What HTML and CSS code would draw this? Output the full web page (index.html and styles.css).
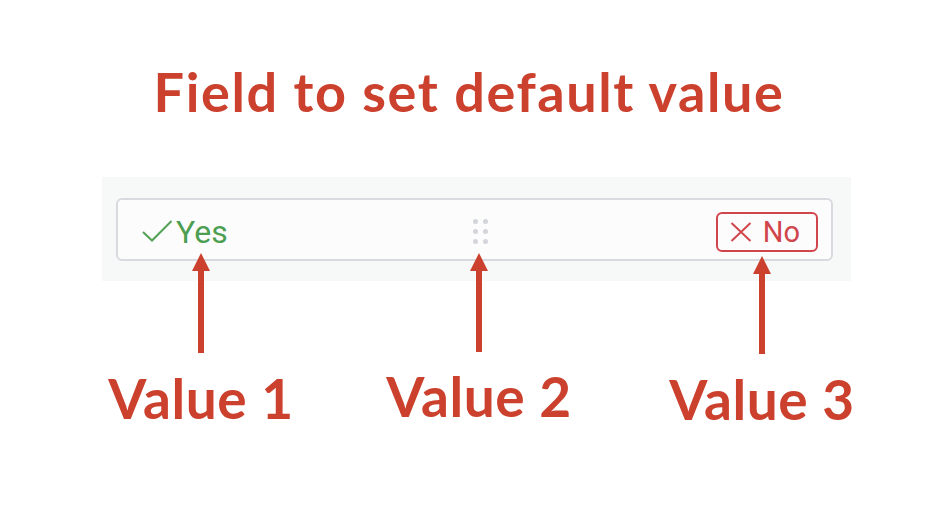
FILE: index.html
```html
<!DOCTYPE html>
<html>
  <head>
    <link rel="stylesheet" href="styles.css">
  </head>
  <body>
    <h1 class="title">Field to set default value</h1>

    <div class="panel">
      <div class="field">
        <span class="opt opt-yes">
          <svg class="icon-check" width="31" height="22" viewBox="0 0 31 22">
            <polyline points="1,12 10,20.5 29.5,1" fill="none" stroke="#52a155" stroke-width="2" />
          </svg>
          Yes
        </span>
        <span class="handle">
          <i></i><i></i><i></i><i></i><i></i><i></i>
        </span>
        <span class="opt opt-no">
          <svg class="icon-x" width="22" height="20" viewBox="0 0 22 20">
            <path d="M1.5 1 L20.5 19 M20.5 1 L1.5 19" fill="none" stroke="#d1474c" stroke-width="2" />
          </svg>
          No
        </span>
      </div>
    </div>

    <div class="notes">
      <div class="note note-1">
        <svg class="arrow" width="18" height="100" viewBox="0 0 18 100">
          <polygon points="9,0 18,18 0,18" fill="#cc412e" />
          <rect x="6" y="16" width="6" height="84" fill="#cc412e" />
        </svg>
        <div class="note-label">Value 1</div>
      </div>
      <div class="note note-2">
        <svg class="arrow" width="18" height="99" viewBox="0 0 18 99">
          <polygon points="9,0 18,18 0,18" fill="#cc412e" />
          <rect x="6" y="16" width="6" height="83" fill="#cc412e" />
        </svg>
        <div class="note-label">Value 2</div>
      </div>
      <div class="note note-3">
        <svg class="arrow" width="18" height="98" viewBox="0 0 18 98">
          <polygon points="9,0 18,18 0,18" fill="#cc412e" />
          <rect x="6" y="16" width="6" height="82" fill="#cc412e" />
        </svg>
        <div class="note-label">Value 3</div>
      </div>
    </div>
  </body>
</html>
```

FILE: styles.css
```css
* {
  box-sizing: border-box;
}
body {
  margin: 0;
  background-color: #ffffff;
  font-family: "Lato", "Liberation Sans", sans-serif;
}

.title {
  margin: 65px 0 0 0;
  font-size: 54px;
  line-height: 54px;
  font-weight: 700;
  letter-spacing: 1.6px;
  color: #cc412e;
  text-align: center;
}

.panel {
  width: 749px;
  height: 104px;
  margin: 58px 0 0 102px;
  padding: 21px 18px 20px 14px;
  background-color: #f7f8f8;
}

.field {
  display: flex;
  align-items: center;
  justify-content: space-between;
  height: 63px;
  padding: 4px 13px 0 24px;
  background-color: #fcfcfd;
  border: 2px solid #d8dadf;
  border-radius: 6px;
  font-family: "Roboto", "Liberation Sans", sans-serif;
}

.opt {
  display: flex;
  align-items: center;
}
.opt-yes {
  font-size: 32px;
  color: #4c9e50;
}
.icon-check {
  margin-right: 3px;
  margin-top: -2px;
}
.opt-no {
  height: 40px;
  padding: 0 16px 0 12px;
  font-size: 29px;
  color: #d0464b;
  border: 2px solid #d0464b;
  border-radius: 6px;
}
.icon-x {
  margin-right: 11px;
}

.handle {
  display: grid;
  grid-template-columns: 5px 5px;
  gap: 5px;
  margin-left: 18px;
}
.handle i {
  width: 5px;
  height: 5px;
  border-radius: 50%;
  background-color: #d3d5da;
}

.notes {
  display: grid;
  grid-template-columns: 280px 276px 290px;
  padding-left: 61px;
  margin-top: -28px;
}

.note {
  display: flex;
  flex-direction: column;
  align-items: center;
}
.note-3 {
  margin-top: 3px;
}
.arrow {
  display: block;
}
.note-label {
  margin-top: 18px;
  font-size: 55px;
  line-height: 55px;
  font-weight: 700;
  letter-spacing: 0.6px;
  color: #cc412e;
}
.note-2 .note-label {
  margin-top: 17px;
}
```
